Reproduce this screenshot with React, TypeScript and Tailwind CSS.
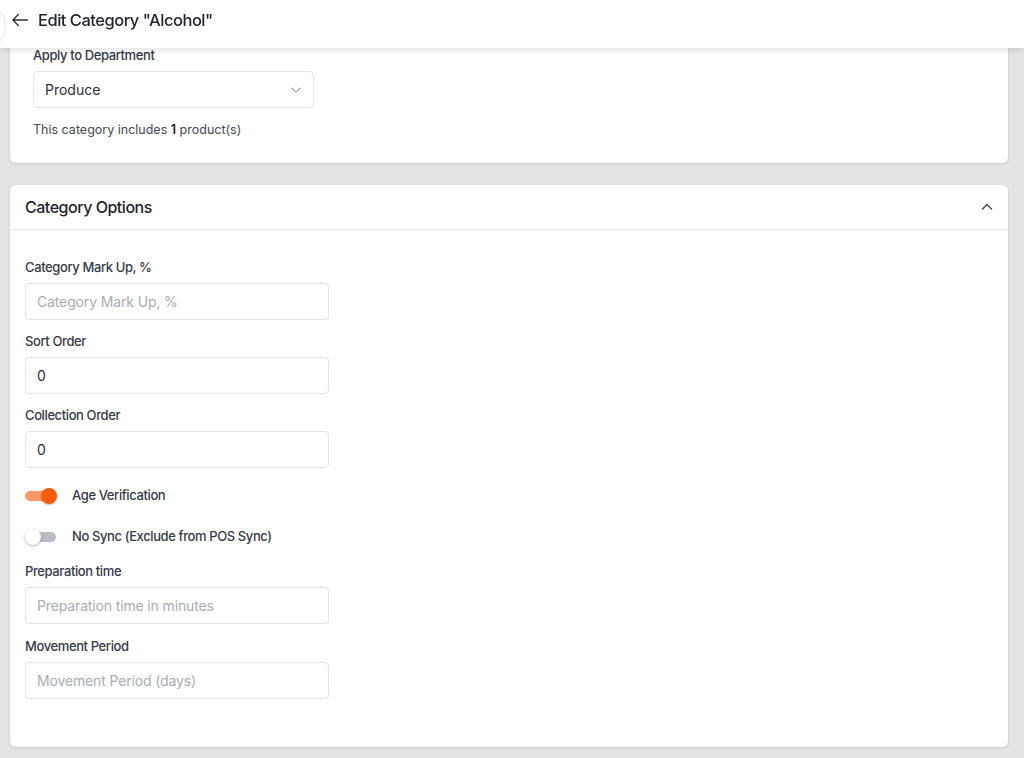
import React from 'react'

const font = { fontFamily: 'Inter, "Noto Sans", sans-serif' }

const Field = ({ label, placeholder, value }: { label: string; placeholder?: string; value?: string }) => (
  <div className="flex flex-col">
    <label className="h-4 text-[13px] font-medium leading-4 tracking-[-0.03em] text-[#343a46]">{label}</label>
    <input
      className="mt-2 h-[37px] w-[304px] rounded-[4px] border border-[#e2e4ea] bg-white px-[11px] text-[14px] tracking-[-0.01em] text-[#2b2f38] placeholder:text-[#a8adb6] focus:outline-none"
      placeholder={placeholder}
      defaultValue={value}
    />
  </div>
)

const Toggle = ({ on, label }: { on: boolean; label: string }) => (
  <div className="flex h-5 items-center">
    <div className="relative h-5 w-[32px]">
      <div
        className={
          on
            ? 'absolute left-0 top-[5px] h-[10px] w-[30px] rounded-full bg-[#fd9b68]'
            : 'absolute left-[2px] top-[5px] h-[10px] w-[29px] rounded-full bg-[#b9bdc7]'
        }
      />
      <div
        className={
          on
            ? 'absolute left-[16px] top-[2px] h-4 w-4 rounded-full bg-[#ff5a0a] shadow-[0_1px_2px_rgba(0,0,0,0.25)]'
            : 'absolute left-0 top-[2px] h-4 w-4 rounded-full bg-white shadow-[0_1px_3px_rgba(0,0,0,0.3)]'
        }
      />
    </div>
    <span className="ml-[15px] text-[13px] font-medium tracking-[-0.03em] text-[#343a46]">{label}</span>
  </div>
)

export default function App() {
  return (
    <div className="relative min-h-[758px] overflow-hidden bg-[#e4e4e4]" style={font}>
      {/* sticky page header */}
      <header className="fixed inset-x-0 top-0 z-10 flex h-12 items-start bg-white pt-[8px] shadow-[0_2px_6px_rgba(0,0,0,0.12)]">
        <div className="absolute -left-[20px] top-[10px] h-[32px] w-[24px] rounded-full bg-white shadow-[0_0_4px_rgba(0,0,0,0.15)]" />
        <button className="ml-[8px] flex h-6 w-6 items-center justify-center text-[#2b2f38]">
          <svg width="20" height="20" viewBox="0 0 24 24" fill="none" stroke="currentColor" strokeWidth="1.6" strokeLinecap="round" strokeLinejoin="round">
            <path d="M21 12H3.5M10 5.5L3.5 12l6.5 6.5" />
          </svg>
        </button>
        <h1 className="ml-[6px] text-[16.5px] font-medium leading-6 tracking-[-0.03em] text-[#1f232b]">Edit Category "Alcohol"</h1>
      </header>

      <main className="flex flex-col pl-[10px] pr-[16px]">
        {/* department card, partly under the header */}
        <section className="rounded-b-[6px] bg-white pb-[25px] pl-[23px] pt-[47px] shadow-[0_1px_3px_rgba(0,0,0,0.12)]">
          <div className="text-[13px] font-medium leading-4 tracking-[-0.03em] text-[#343a46]">Apply to Department</div>
          <div className="mt-2 flex h-[37px] w-[281px] items-center justify-between rounded-[4px] border border-[#e2e4ea] pl-[11px] pr-[11px]">
            <span className="text-[14px] text-[#2b2f38]">Produce</span>
            <svg width="12" height="12" viewBox="0 0 12 12" fill="none" stroke="#a3a8b1" strokeWidth="1.1" strokeLinecap="round" strokeLinejoin="round">
              <path d="M1.5 4l4.5 4 4.5-4" />
            </svg>
          </div>
          <p className="mt-[14px] text-[12.5px] leading-4 text-[#434955]">
            This category includes <span className="font-semibold text-[#1f232b]">1</span> product(s)
          </p>
        </section>

        {/* category options */}
        <section className="mt-[22px] rounded-[6px] bg-white shadow-[0_1px_3px_rgba(0,0,0,0.12)]">
          <div className="flex h-[45px] items-center justify-between border-b border-[#e6e8ec] pl-[15px] pr-[14px]">
            <h2 className="text-[16px] font-medium tracking-[-0.03em] text-[#1f232b]">Category Options</h2>
            <svg width="14" height="14" viewBox="0 0 14 14" fill="none" stroke="#4b5261" strokeWidth="1.6" strokeLinecap="round" strokeLinejoin="round">
              <path d="M2.5 9l4.5-4.5 4.5 4.5" />
            </svg>
          </div>

          <div className="flex flex-col px-[15px] pb-[48px] pt-[29px]">
            <Field label="Category Mark Up, %" placeholder="Category Mark Up, %" />
            <div className="mt-[13px]">
              <Field label="Sort Order" value="0" />
            </div>
            <div className="mt-[13px]">
              <Field label="Collection Order" value="0" />
            </div>
            <div className="mt-[18px]">
              <Toggle on label="Age Verification" />
            </div>
            <div className="mt-[21px]">
              <Toggle on={false} label="No Sync (Exclude from POS Sync)" />
            </div>
            <div className="mt-[16px]">
              <Field label="Preparation time" placeholder="Preparation time in minutes" />
            </div>
            <div className="mt-[14px]">
              <Field label="Movement Period" placeholder="Movement Period (days)" />
            </div>
          </div>
        </section>
      </main>
    </div>
  )
}
